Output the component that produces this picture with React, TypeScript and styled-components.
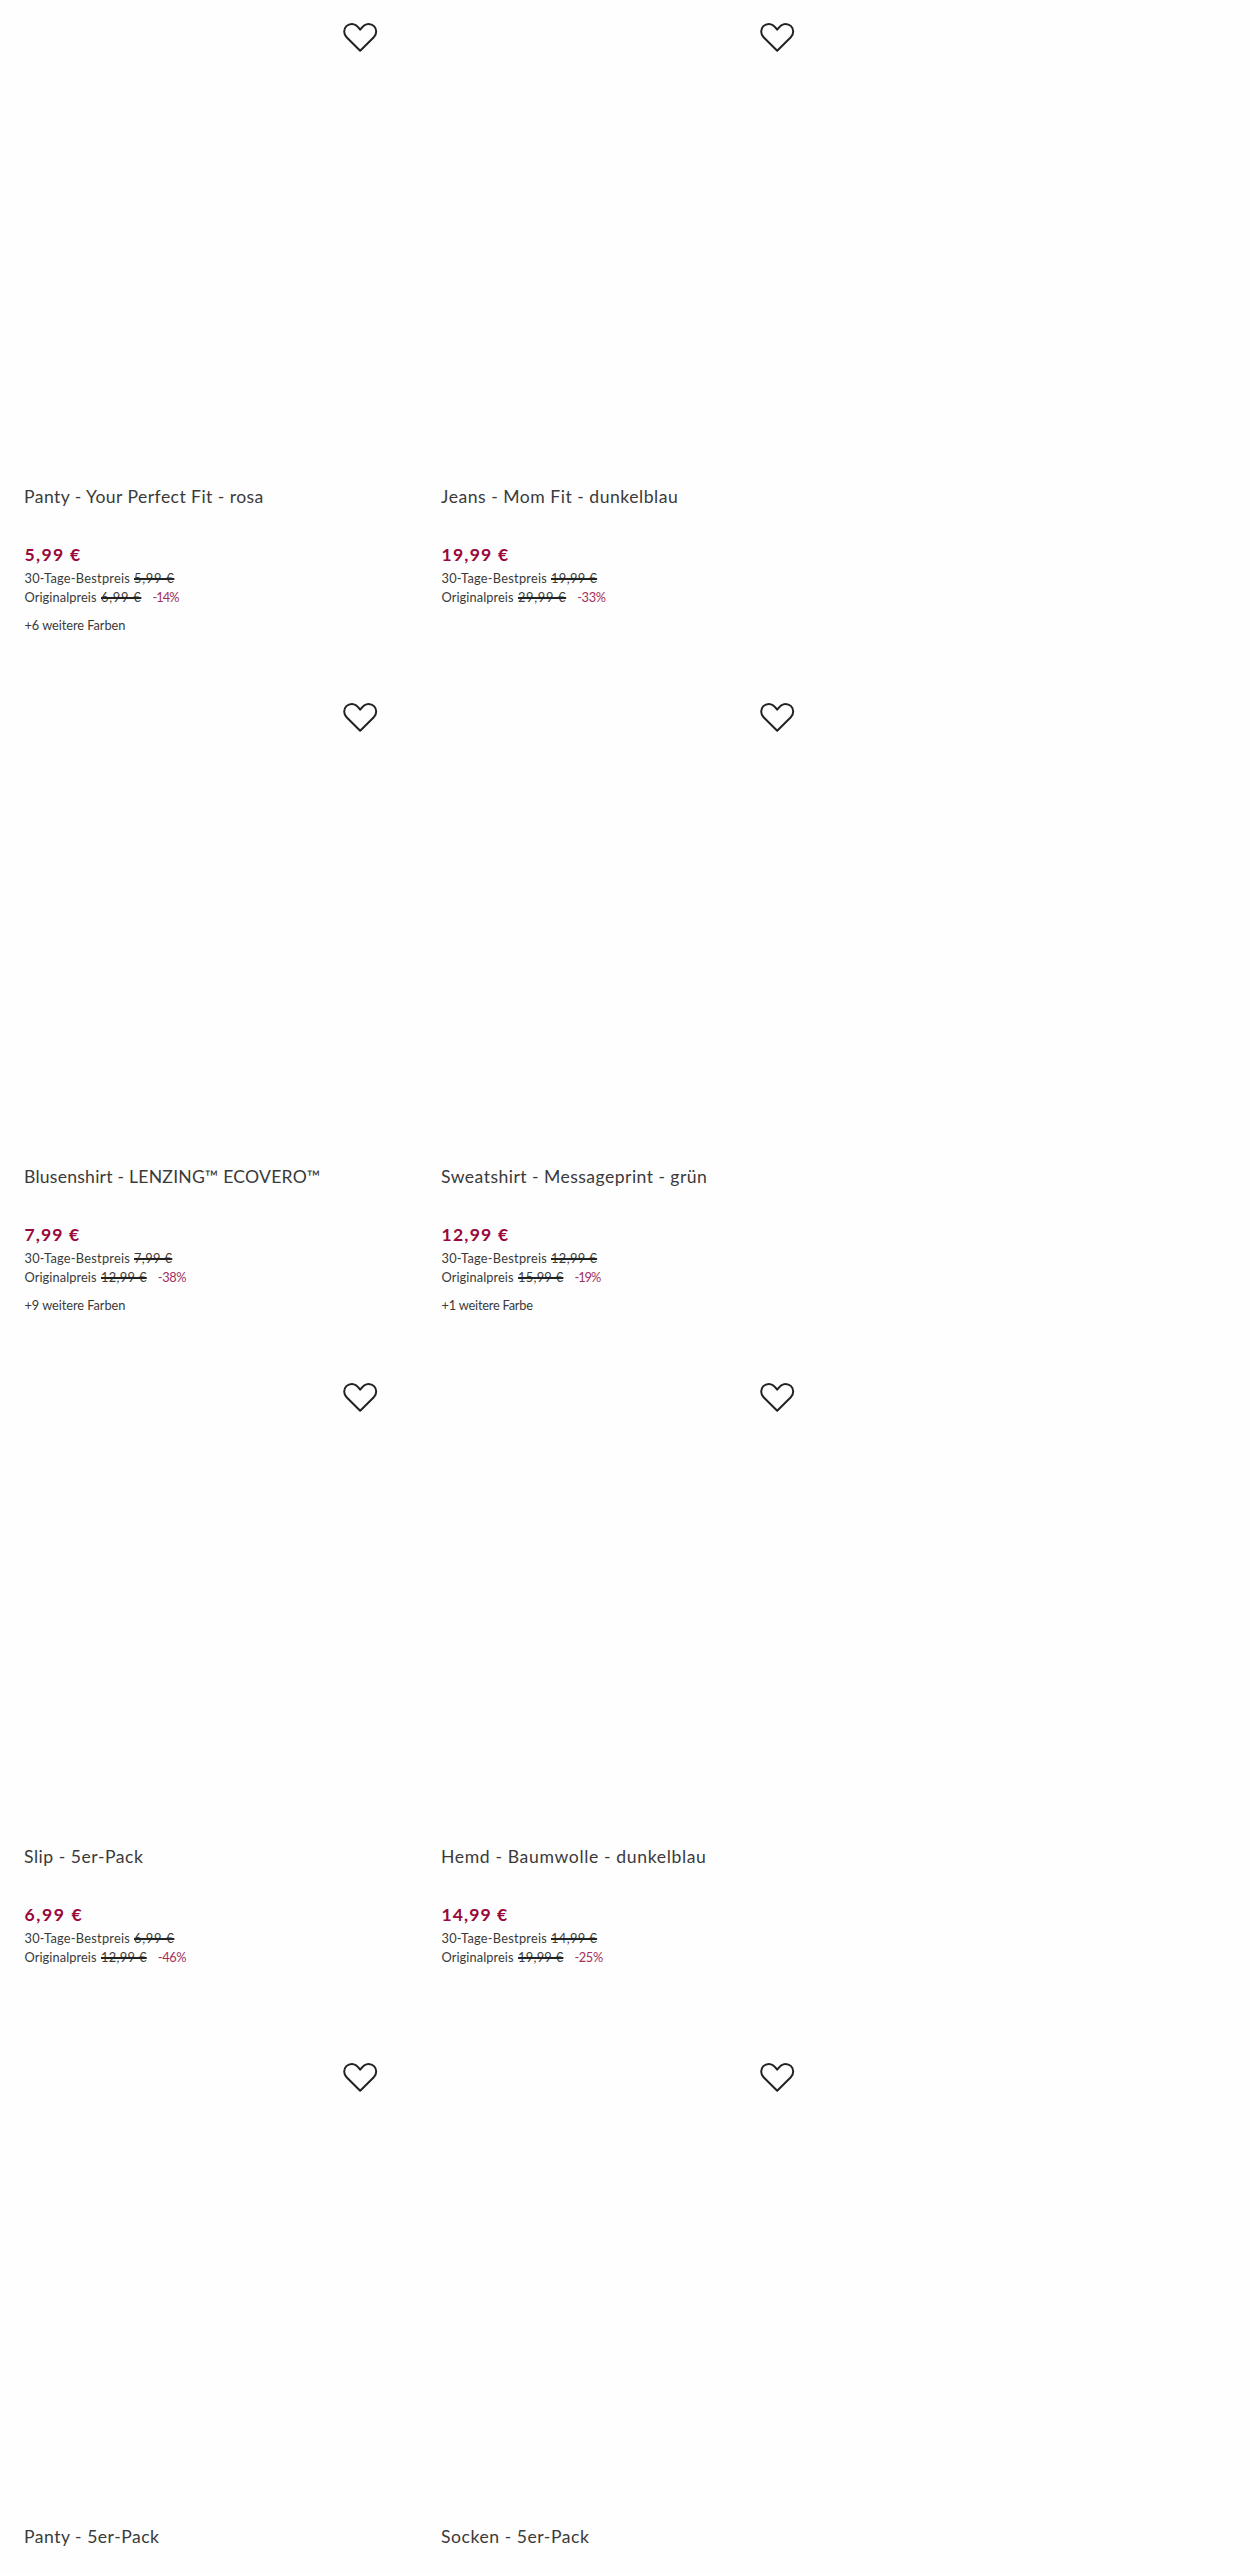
import React from "react";
import styled, { createGlobalStyle } from "styled-components";

const GlobalStyle = createGlobalStyle`
  *, *::before, *::after { box-sizing: border-box; }
  body {
    margin: 0;
    background: #fefefe;
    color: #3a3a3a;
    font-family: Lato, "Open Sans", sans-serif;
  }
`;

const Page = styled.main`
  height: 2573px;
  overflow: hidden;
`;

const Grid = styled.div`
  display: grid;
  grid-template-columns: repeat(3, 417px);
  grid-auto-rows: 680px;
  width: 1251px;
`;

const Card = styled.article`
  grid-column: span 1;
  display: flex;
  flex-direction: column;
  padding: 0 24px;

  &:nth-child(2n + 1) {
    grid-column: 1;
  }
`;

const Media = styled.div`
  display: flex;
  justify-content: flex-end;
  align-items: flex-start;
  height: 484px;
  padding: 22px 15px 0 0;
`;

const WishButton = styled.button`
  display: flex;
  padding: 0;
  border: 0;
  background: none;
  color: #222;
`;

const Title = styled.h3<{ $track: number }>`
  margin: 0;
  height: 54px;
  font-size: 17.6px;
  font-weight: 400;
  line-height: 26px;
  letter-spacing: ${(p) => p.$track}px;
  white-space: nowrap;
`;

const Price = styled.div<{ $track: number }>`
  padding-left: 0.5px;
  height: 31px;
  color: #99083a;
  font-size: 17.6px;
  font-weight: 700;
  line-height: 33px;
  letter-spacing: ${(p) => p.$track}px;
`;

const PriceLine = styled.div`
  display: flex;
  padding-left: 0.5px;
  height: 19px;
  font-size: 12.8px;
  line-height: 19px;
  white-space: nowrap;
`;

const Label = styled.span<{ $width: number; $track: number }>`
  width: ${(p) => p.$width}px;
  letter-spacing: ${(p) => p.$track}px;
`;

const Struck = styled.s<{ $track: number }>`
  letter-spacing: ${(p) => p.$track}px;
  text-decoration-color: #222;
  text-decoration-thickness: 1.5px;
`;

const Discount = styled.span<{ $track: number }>`
  margin-left: 11px;
  color: #a3305a;
  letter-spacing: ${(p) => p.$track}px;
`;

const Colors = styled.div<{ $track: number }>`
  margin-top: 9px;
  padding-left: 0.5px;
  font-size: 12.8px;
  line-height: 19px;
  letter-spacing: ${(p) => p.$track}px;
`;

type Tracked = [text: string, tracking: number];

interface Product {
  title: Tracked;
  price?: Tracked;
  best?: Tracked;
  original?: Tracked;
  discount?: Tracked;
  colors?: Tracked;
}

const products: Product[] = [
  {
    title: ["Panty - Your Perfect Fit - rosa", 0.43],
    price: ["5,99 €", 1.3],
    best: ["5,99 €", 0.75],
    original: ["6,99 €", 0.75],
    discount: ["-14%", -0.9],
    colors: ["+6 weitere Farben", -0.06],
  },
  {
    title: ["Jeans - Mom Fit - dunkelblau", 0.51],
    price: ["19,99 €", 1.21],
    best: ["19,99 €", 0.4],
    original: ["29,99 €", 0.7],
    discount: ["-33%", -0.37],
  },
  {
    title: ["Blusenshirt - LENZING™ ECOVERO™", 0.23],
    price: ["7,99 €", 1.1],
    best: ["7,99 €", 0.4],
    original: ["12,99 €", 0.35],
    discount: ["-38%", -0.37],
    colors: ["+9 weitere Farben", -0.06],
  },
  {
    title: ["Sweatshirt - Messageprint - grün", 0.45],
    price: ["12,99 €", 1.21],
    best: ["12,99 €", 0.4],
    original: ["15,99 €", 0.3],
    discount: ["-19%", -1],
    colors: ["+1 weitere Farbe", -0.21],
  },
  {
    title: ["Slip - 5er-Pack", 0.52],
    price: ["6,99 €", 1.6],
    best: ["6,99 €", 0.75],
    original: ["12,99 €", 0.35],
    discount: ["-46%", -0.37],
  },
  {
    title: ["Hemd - Baumwolle - dunkelblau", 0.63],
    price: ["14,99 €", 1.05],
    best: ["14,99 €", 0.4],
    original: ["19,99 €", 0.3],
    discount: ["-25%", -0.37],
  },
  { title: ["Panty - 5er-Pack", 0.49] },
  { title: ["Socken - 5er-Pack", 0.53] },
];

const Heart = () => (
  <svg width="36" height="30" viewBox="0 0 36 30" fill="none" aria-hidden="true">
    <path
      d="M18.2 7.6C15.8 4.2 13.4 1.9 9.9 1.9C5.4 1.9 2.2 5.3 2.2 9.6C2.2 11.9 3.1 13.8 4.6 15.3L18.2 28.7L31.8 15.3C33.3 13.8 34.2 11.9 34.2 9.6C34.2 5.3 31 1.9 26.5 1.9C23 1.9 20.6 4.2 18.2 7.6Z"
      stroke="currentColor"
      strokeWidth="2"
      strokeLinejoin="round"
    />
  </svg>
);

function ProductCard({ title, price, best, original, discount, colors }: Product) {
  return (
    <Card>
      <Media>
        <WishButton aria-label="Merken">
          <Heart />
        </WishButton>
      </Media>
      <Title $track={title[1]}>{title[0]}</Title>
      {price && <Price $track={price[1]}>{price[0]}</Price>}
      {best && (
        <PriceLine>
          <Label $width={109.5} $track={0.25}>30-Tage-Bestpreis</Label>
          <Struck $track={best[1]}>{best[0]}</Struck>
        </PriceLine>
      )}
      {original && (
        <PriceLine>
          <Label $width={76.5} $track={0.08}>Originalpreis</Label>
          <Struck $track={original[1]}>{original[0]}</Struck>
          {discount && <Discount $track={discount[1]}>{discount[0]}</Discount>}
        </PriceLine>
      )}
      {colors && <Colors $track={colors[1]}>{colors[0]}</Colors>}
    </Card>
  );
}

export default function App() {
  return (
    <Page>
      <GlobalStyle />
      <Grid>
        {products.map((p) => (
          <ProductCard key={p.title[0]} {...p} />
        ))}
      </Grid>
    </Page>
  );
}
